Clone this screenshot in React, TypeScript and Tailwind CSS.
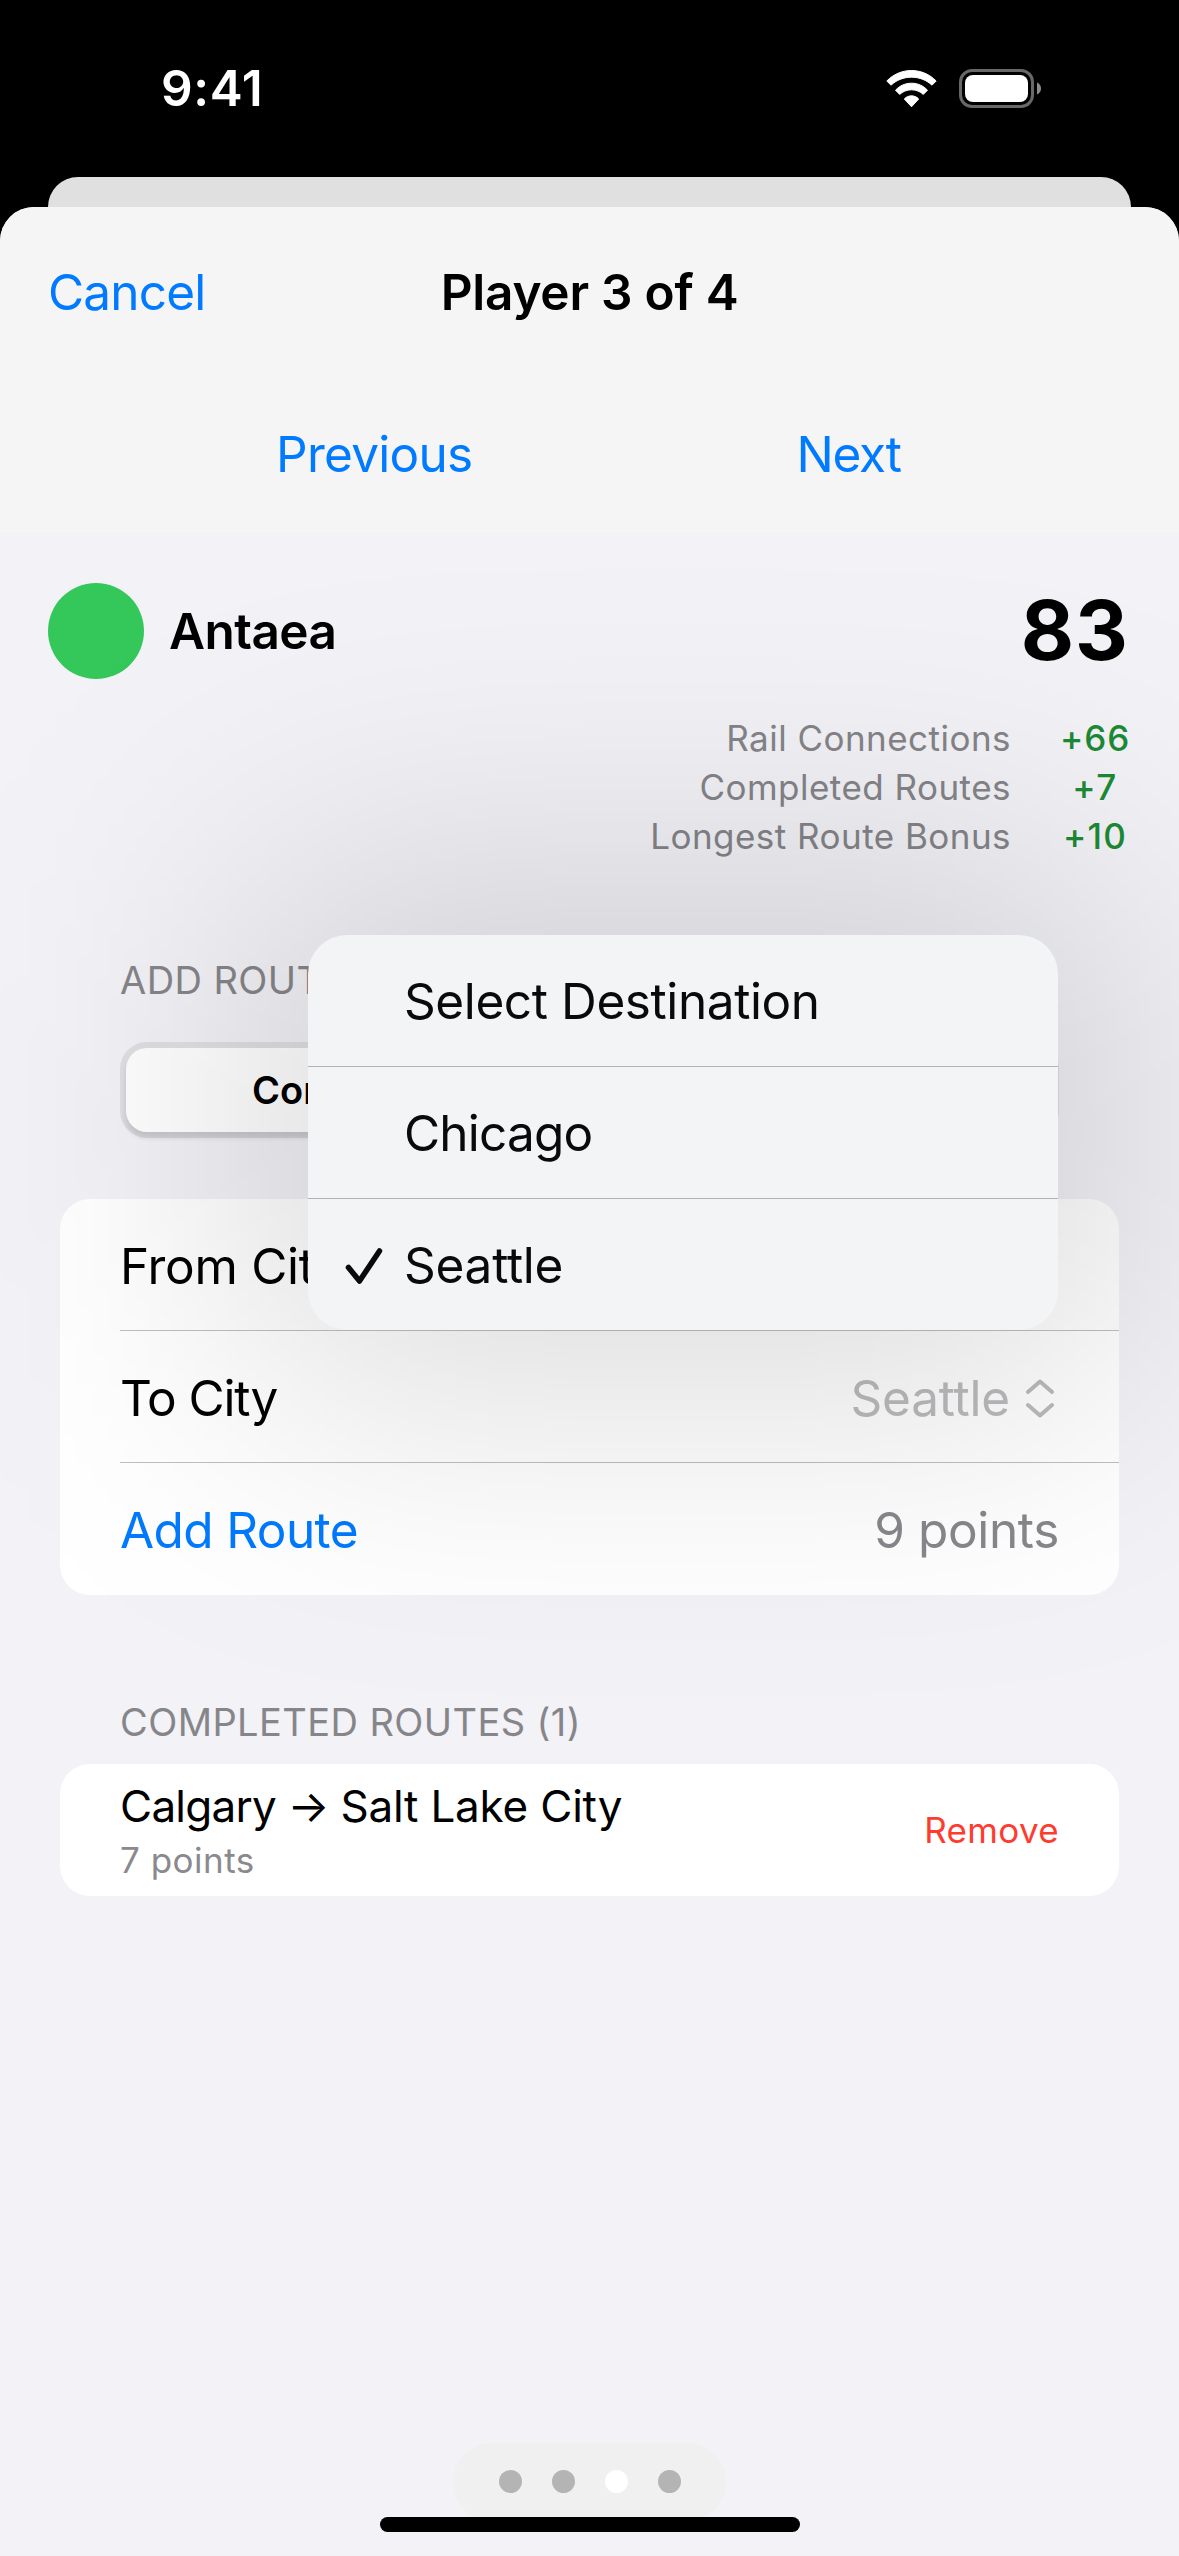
import type { ReactNode } from "react";

const scoreLines = [
  { label: "Rail Connections", value: "+66", valueClass: "tracking-[0.9px]" },
  { label: "Completed Routes", value: "+7", valueClass: "tracking-[1.6px]" },
  { label: "Longest Route Bonus", value: "+10", valueClass: "tracking-[1.2px]" },
];

const destinations = [
  { label: "Select Destination", className: "tracking-[-0.4px]" },
  { label: "Chicago", className: "tracking-[-0.8px]" },
  { label: "Seattle", className: "tracking-[-0.25px]" },
];

const selectedDestination = "Seattle";
const pages = [1, 2, 3, 4];
const currentPage = 3;

export default function App() {
  return (
    <div className="relative flex h-[2556px] w-[1179px] flex-col overflow-hidden bg-black font-['Inter',sans-serif] text-[49.5px] leading-none whitespace-nowrap text-black">
      <StatusBar />

      {/* Top edge of the sheet underneath */}
      <div className="mx-12 h-[30px] shrink-0 rounded-t-[30px] bg-[#e0e0e0]" />

      <div className="relative flex flex-1 flex-col overflow-hidden rounded-t-[34px] bg-[#f2f2f7]">
        <SheetHeader />
        <div className="relative flex flex-1 flex-col">
          <PlayerSummary />
          <AddRouteSection />
          <CompletedRoutes />
          <DestinationMenu />
          <PageControl />
        </div>
      </div>
    </div>
  );
}

function StatusBar() {
  return (
    <header className="flex h-[177px] shrink-0 items-center justify-between pr-[137px] pl-[161px] text-white">
      <span className="font-semibold tracking-[0.6px]">9:41</span>
      <div className="flex items-center gap-[22px]">
        <svg
          width="51"
          height="38"
          viewBox="0 0 51 38"
          fill="white"
          stroke="white"
          strokeWidth="1"
          strokeLinejoin="round"
          aria-hidden="true"
        >
          <path d="M.8 11C7.300 4.400 16 .5 25.500 .5S43.700 4.400 50.200 11L46 15.200C40.700 10.200 33.500 7.200 25.500 7.200S10.300 10.200 5 15.200Z" />
          <path d="M9.500 20.200C13.600 15.800 19.200 13.200 25.500 13.200S37.400 15.800 41.500 20.200L37.300 24.400C34.300 21.600 30.200 19.800 25.500 19.800S16.700 21.600 13.700 24.400Z" />
          <path d="M18.300 29C20.200 27 22.700 25.800 25.500 25.800S30.800 27 32.700 29L25.500 36.800Z" />
        </svg>
        <svg width="83" height="39" viewBox="0 0 83 39" fill="none" aria-hidden="true">
          <rect x="1.500" y="1.500" width="72" height="36" rx="11.500" stroke="#686868" strokeWidth="3" />
          <rect x="6" y="6" width="63" height="27" rx="8" fill="white" />
          <path d="M78 13.500c2.600 1.100 4 3.400 4 6s-1.400 4.900-4 6z" fill="#8c8c8c" />
        </svg>
      </div>
    </header>
  );
}

function SheetHeader() {
  return (
    <div className="flex h-[325px] shrink-0 flex-col bg-[#f5f5f5]">
      <div className="relative flex h-[171px] items-center justify-center pt-px">
        <button type="button" className="absolute left-12 tracking-[-0.8px] text-[#007aff]">
          Cancel
        </button>
        <h1 className="font-semibold tracking-[-0.24px]">Player 3 of 4</h1>
      </div>
      <div className="flex h-[154px] items-center gap-[324px] pl-[276px] text-[#007aff]">
        <button type="button" className="tracking-[-0.73px]">
          Previous
        </button>
        <button type="button" className="tracking-[-1.2px]">
          Next
        </button>
      </div>
    </div>
  );
}

function PlayerSummary() {
  return (
    <section className="flex flex-col pt-[51px]">
      <div className="flex h-24 items-center pr-[50px] pl-12">
        <span className="size-24 rounded-full bg-[#34c759]" />
        <span className="ml-[25px] pt-0.5 font-semibold tracking-[-0.54px]">Antaea</span>
        <span className="ml-auto text-[82px] font-bold tracking-[1px]">83</span>
      </div>
      <div className="mt-[35px] flex flex-col pr-[49px] text-[35px]">
        {scoreLines.map((line) => (
          <div key={line.label} className="flex h-[49px] items-center justify-end">
            <span className="tracking-[0.47px] text-[#848489]">{line.label}</span>
            <span className="ml-[49px] flex w-[70px] justify-center">
              <span className={`font-medium text-[#1c8a35] ${line.valueClass}`}>{line.value}</span>
            </span>
          </div>
        ))}
      </div>
    </section>
  );
}

function AddRouteSection() {
  return (
    <section className="mt-[95px]">
      <SectionLabel>ADD ROUTE</SectionLabel>
      <div className="mt-[38px] ml-[120px] flex h-24 w-[939px] rounded-[27px] bg-[#dfdfe4] p-1.5 text-[38px]">
        <div className="flex-1 rounded-[21px] bg-white pl-[126px] leading-[84px] font-semibold shadow-[0_6px_5px_rgba(0,0,0,0.1)]">
          Completed
        </div>
        <div className="flex-1 text-center leading-[84px]">Incomplete</div>
      </div>
      <Card className="mt-[61px]">
        <Row>
          <span className="tracking-[-0.28px]">From City</span>
        </Row>
        <Row>
          <span className="tracking-[-1.1px]">To City</span>
          <span className="flex items-center text-[#bcbcbe]">
            <span className="tracking-[-0.2px]">Seattle</span>
            <svg width="28" height="39" viewBox="0 0 28 39" fill="none" className="mr-[5px] ml-4" aria-hidden="true">
              <path
                d="M2 13L14 2.500L26 13M2 26L14 36.500L26 26"
                stroke="currentColor"
                strokeWidth="4"
                strokeLinecap="round"
                strokeLinejoin="round"
              />
            </svg>
          </span>
        </Row>
        <Row last>
          <button type="button" className="tracking-[-0.6px] text-[#007aff]">
            Add Route
          </button>
          <span className="tracking-[-0.36px] text-[#88888c]">9 points</span>
        </Row>
      </Card>
    </section>
  );
}

function CompletedRoutes() {
  return (
    <section className="mt-[103px]">
      <SectionLabel>COMPLETED ROUTES (1)</SectionLabel>
      <Card className="mt-[18px]">
        <div className="flex h-[132px] items-center justify-between px-[60px]">
          <div className="flex flex-col pt-1.5">
            <span className="text-[44px] leading-[54px]">
              <span className="tracking-[-0.75px]">Calgary → </span>
              <span className="tracking-[-0.2px]">Salt Lake City</span>
            </span>
            <span className="text-[35px] leading-[54px] tracking-[0.5px] text-[#8a8a8e]">7 points</span>
          </div>
          <button type="button" className="text-[35px] tracking-[0.35px] text-[#ff3b30]">
            Remove
          </button>
        </div>
      </Card>
    </section>
  );
}

function DestinationMenu() {
  return (
    <div className="absolute top-[403px] left-[308px] w-[750px]">
      {/* Wide, soft shadow that dims the list around the menu */}
      <div className="absolute -inset-[66px] rounded-[66px] bg-black/14 blur-[150px]" aria-hidden="true" />
      <ul role="listbox" className="relative rounded-[39px] bg-[#f3f4f5] text-[#0a0a0a]">
        {destinations.map((item) => (
          <li
            key={item.label}
            role="option"
            aria-selected={item.label === selectedDestination}
            className="flex h-[132px] items-center border-b border-[#b2b2b4] pt-0.5 last:h-[131px] last:border-b-0"
          >
            <span className="flex w-24 justify-end pr-[21px]">
              {item.label === selectedDestination && (
                <svg width="38" height="38" viewBox="0 0 38 38" fill="none" aria-hidden="true">
                  <path
                    d="M3.500 20.500L14.500 34L34.500 4"
                    stroke="currentColor"
                    strokeWidth="5.500"
                    strokeLinecap="round"
                    strokeLinejoin="round"
                  />
                </svg>
              )}
            </span>
            <span className={item.className}>{item.label}</span>
          </li>
        ))}
      </ul>
    </div>
  );
}

function PageControl() {
  return (
    <footer className="relative mt-auto flex flex-col items-center pb-6">
      <div className="flex h-[78px] w-[273px] items-center justify-center gap-[30px] rounded-full bg-[#f0f0f1] pb-px">
        {pages.map((page) => (
          <span
            key={page}
            className={`size-[23px] rounded-full ${page === currentPage ? "bg-white" : "bg-[#b4b4b4]"}`}
          />
        ))}
      </div>
      <div className="relative -mt-1 h-[15px] w-[420px] rounded-full bg-black" />
    </footer>
  );
}

function SectionLabel({ children }: { children: ReactNode }) {
  return <h2 className="pl-[120px] text-[38px] leading-[48px] tracking-[0.42px] text-[#86868a]">{children}</h2>;
}

function Card({ className, children }: { className: string; children: ReactNode }) {
  return <div className={`mx-[60px] rounded-[30px] bg-white ${className}`}>{children}</div>;
}

// Separators start at the text inset and run to the card's right edge.
function Row({ last = false, children }: { last?: boolean; children: ReactNode }) {
  return (
    <div
      className={`ml-[60px] flex h-[132px] items-center justify-between pt-1 pr-[60px] ${
        last ? "" : "border-b border-[#c0c0c2]"
      }`}
    >
      {children}
    </div>
  );
}
